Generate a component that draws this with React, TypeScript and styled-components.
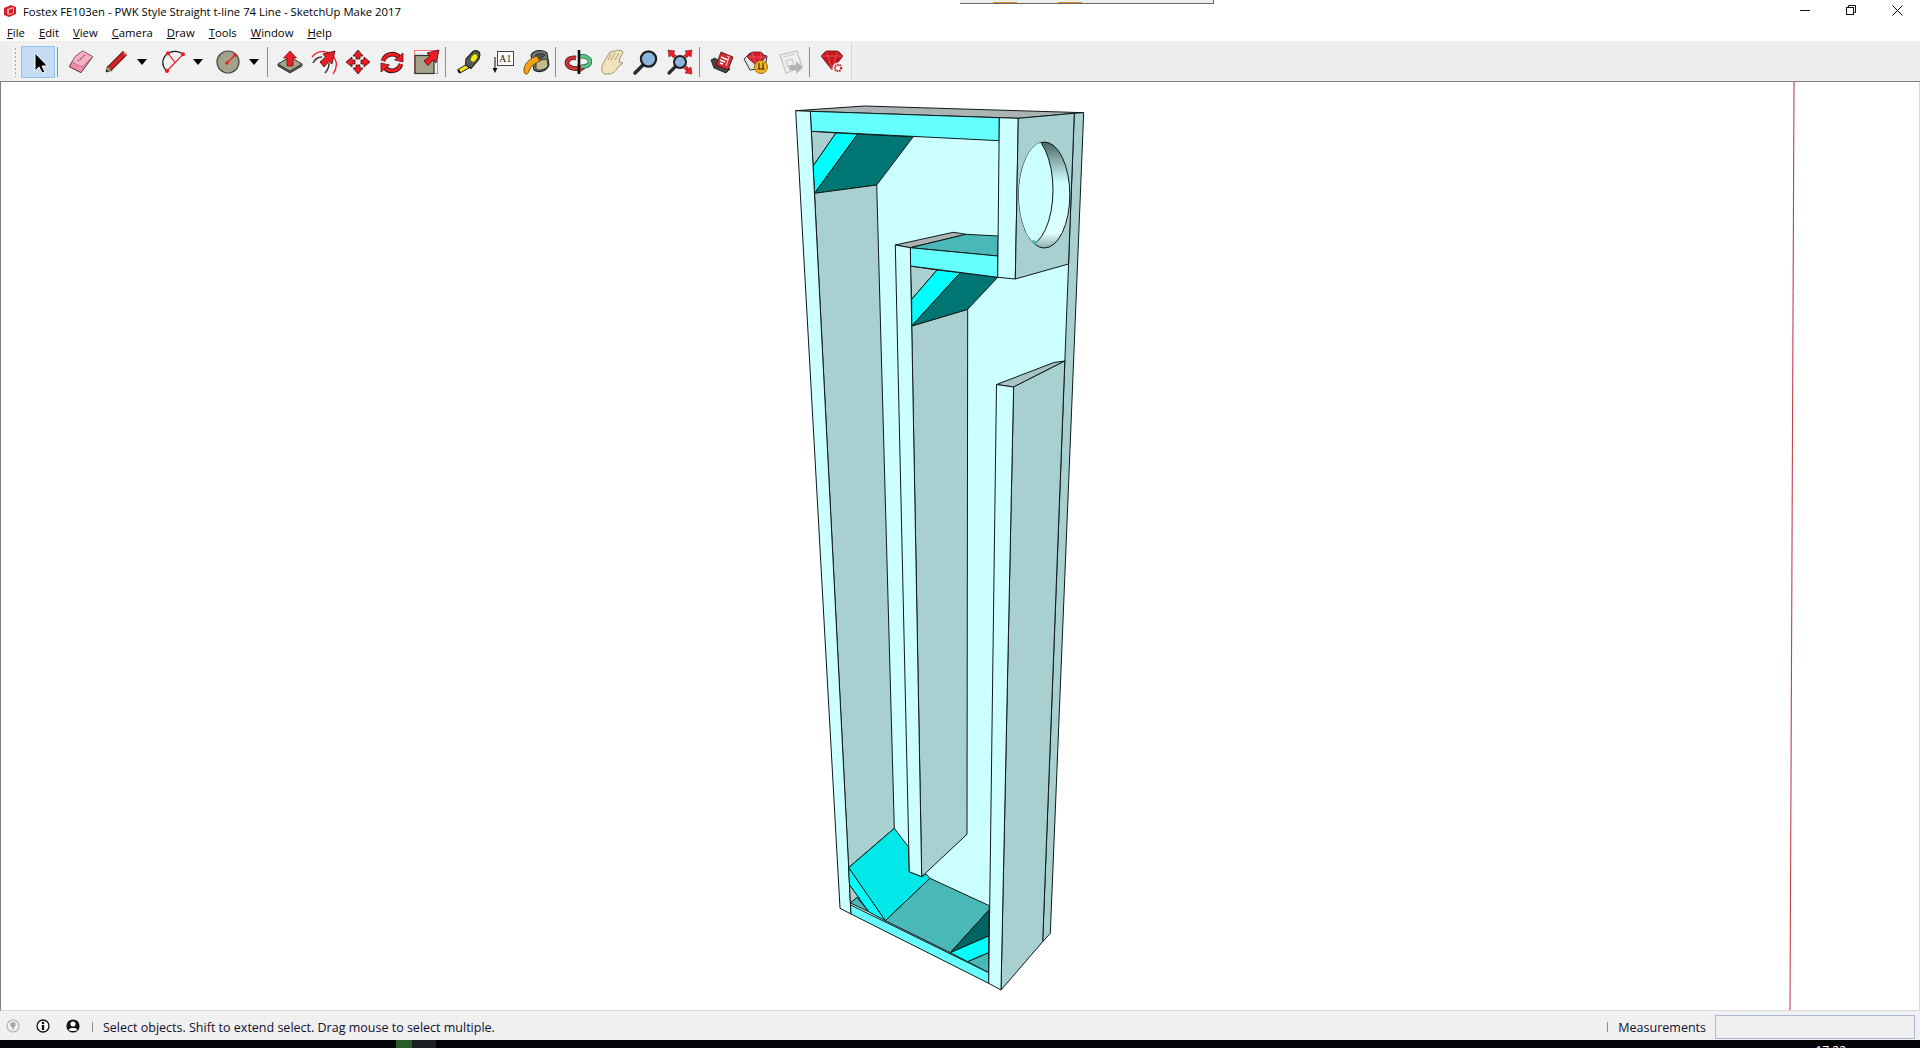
import React from 'react';
import styled, { createGlobalStyle } from 'styled-components';

const GlobalStyle = createGlobalStyle`
  html, body {
    margin: 0;
    padding: 0;
    background: #ffffff;
    overflow: hidden;
  }
`;

const uiFont = `"Open Sans", "Noto Sans", "Liberation Sans", sans-serif`;

/* ---------- toolbar icons, all on a 28 x 28 box ---------- */

const Icon = ({ children }: { children: React.ReactNode }) => (
  <svg width="28" height="28" viewBox="0 0 28 28">
    {children}
  </svg>
);

const SelectIcon = () => (
  <Icon>
    <path d="M11 5 L11 23 L15 19 L18 25 L21 24 L18 18 L23.5 18 Z" fill="#000" stroke="#fff" strokeWidth="1" />
  </Icon>
);

const EraserIcon = () => (
  <Icon>
    <path d="M15.7 3 L25.7 8.7 L14 24.7 L2.3 18.7 L8 8.7 Z" fill="#ef8fa8" stroke="#50303a" strokeWidth="1" />
    <path d="M15.7 3 L25.7 8.7 L15 19 L5 14 L8 8.7 Z" fill="#f6b2c2" stroke="#a06070" strokeWidth="0.7" />
    <path d="M11 13 L18 7" stroke="#a05868" strokeWidth="1.6" strokeDasharray="1.5 1" />
  </Icon>
);

const PencilIcon = () => (
  <Icon>
    <path d="M7 21 L23 5" stroke="#3a1010" strokeWidth="6" strokeLinecap="butt" />
    <path d="M7 21 L23 5" stroke="#d81e24" strokeWidth="4" strokeLinecap="butt" />
    <path d="M4 24 L5.5 18 L10 22.5 Z" fill="#b8a070" stroke="#404020" strokeWidth="0.8" />
    <path d="M4 24 L4.7 21.5 L6.5 23.2 Z" fill="#111" />
    <path d="M22 4 L24.5 6.5" stroke="#e8a0a0" strokeWidth="2" />
  </Icon>
);

const ArcIcon = () => (
  <Icon>
    <path d="M9 23 C3 18 3.5 10 10 5.3 C14.5 2.5 21 2.8 25 6.3" fill="none" stroke="#111" strokeWidth="1.2" />
    <path d="M25 6.3 L9 23 M10 5.3 L17 14.5" stroke="#ee1c25" strokeWidth="1.2" />
    <circle cx="10" cy="5.3" r="2" fill="#ee1c25" />
    <circle cx="25" cy="6.3" r="2" fill="#ee1c25" />
    <circle cx="9" cy="23" r="2" fill="#ee1c25" />
  </Icon>
);

const CircleIcon = () => (
  <Icon>
    <circle cx="14" cy="14" r="11" fill="#a5a28a" stroke="#4a4a40" strokeWidth="1.2" />
    <path d="M13 15 L21 7" stroke="#ee1c25" strokeWidth="1.2" />
    <circle cx="13" cy="15" r="1.8" fill="#ee1c25" />
    <circle cx="21" cy="7" r="1.8" fill="#ee1c25" />
  </Icon>
);

const PushPullIcon = () => (
  <Icon>
    <path d="M2 16 L14 9 L26 16 L26 18 L14 25 L2 18 Z" fill="#55553f" stroke="#222" strokeWidth="0.8" />
    <path d="M2 16 L14 9 L26 16 L14 23 Z" fill="#a5a28a" stroke="#333" strokeWidth="0.8" />
    <path d="M14 3 L20.5 10 L17 10 L17 18 L11 18 L11 10 L7.5 10 Z" fill="#ee1c25" stroke="#601010" strokeWidth="0.7" />
  </Icon>
);

const FollowIcon = () => (
  <Icon>
    <path d="M2 9 C8 1 20 2 25 11 C27.5 16 26.5 21 23 26" fill="none" stroke="#ee1c25" strokeWidth="1.3" />
    <path d="M3 15 C5 11 9 9 12 9 M15 25 C18 22 19 18 19 15" fill="none" stroke="#333" strokeWidth="1.4" />
    <path d="M25 3 L13 6 L15.5 9 L10 14 L14 19 L19 13.5 L22 16 Z" fill="#ee1c25" stroke="#401010" strokeWidth="0.8" />
  </Icon>
);

const MoveIcon = () => (
  <Icon>
    {[0, 90, 180, 270].map((angle) => (
      <path
        key={angle}
        d="M14 2 L19 8 L16 8 L16 11 L12 11 L12 8 L9 8 Z"
        fill="#ee1c25"
        stroke="#401010"
        strokeWidth="0.8"
        transform={`rotate(${angle} 14 14)`}
      />
    ))}
  </Icon>
);

const RotateIcon = () => (
  <Icon>
    <path d="M5 13 C7 6 16 4 21 9" fill="none" stroke="#301010" strokeWidth="4.6" />
    <path d="M5 13 C7 6 16 4 21 9" fill="none" stroke="#ee1c25" strokeWidth="3" />
    <path d="M25 5 L25 14 L16.5 12 Z" fill="#ee1c25" stroke="#401010" strokeWidth="0.7" />
    <path d="M23 16 C21 23 12 25 7 20" fill="none" stroke="#301010" strokeWidth="4.6" />
    <path d="M23 16 C21 23 12 25 7 20" fill="none" stroke="#ee1c25" strokeWidth="3" />
    <path d="M3 24 L3 15 L11.5 17 Z" fill="#ee1c25" stroke="#401010" strokeWidth="0.7" />
  </Icon>
);

const ScaleIcon = () => (
  <Icon>
    <rect x="2.5" y="2.5" width="23" height="23" fill="none" stroke="#f08088" strokeWidth="1" />
    <rect x="3" y="7.5" width="19" height="18" fill="#a5a28a" stroke="#333" strokeWidth="1.2" />
    <path d="M27 2 L15 5 L18 8 L12 13 L16 17.5 L21 12 L24 15 Z" fill="#ee1c25" stroke="#401010" strokeWidth="0.8" />
  </Icon>
);

const TapeIcon = () => (
  <Icon>
    <path d="M13 16 L4 21.5 L6 25 L15 20 Z" fill="#f2e020" stroke="#222" strokeWidth="1" />
    <path d="M12 11 L19 3.5 C22 1.5 26 3 26 6.5 L25 11 L17 20.5 L11.5 17 Z" fill="#5a5a4c" stroke="#1c1c1c" strokeWidth="1.1" />
    <ellipse cx="20" cy="10" rx="2.6" ry="4" fill="#f6ee10" transform="rotate(30 20 10)" />
    <path d="M4 21.5 L6 25" stroke="#111" strokeWidth="2" />
  </Icon>
);

const TextIcon = () => (
  <Icon>
    <rect x="9.5" y="3.5" width="16" height="14" fill="#ffffff" stroke="#444" strokeWidth="1" />
    <IconLabel x="17.5" y="14">A1</IconLabel>
    <path d="M7 9 L7 21" stroke="#333" strokeWidth="1.2" />
    <path d="M4.5 20 L9.5 20 L7 25 Z" fill="#111" />
  </Icon>
);

const PaintIcon = () => (
  <Icon>
    <path d="M9 7 C12 2 21 1 25 5 L27 17 C24 24 16 25 12 22 Z" fill="#6e7a70" stroke="#222" strokeWidth="1.1" />
    <path d="M13 8 C16 5 21 5 23 7 C21 10 16 12 13 8 Z" fill="#4d5450" stroke="#222" strokeWidth="0.8" />
    <path d="M14 13 L25 11 L26 18 C23 22 17 23 14 21 Z" fill="#c4bc8c" stroke="#222" strokeWidth="0.8" />
    <path d="M15 8 C8 10 1 16 2 24 C3 27 6 27 7 23 C9 18 13 15 18 13 Z" fill="#f6a316" stroke="#5a3a05" strokeWidth="0.8" />
  </Icon>
);

const OrbitIcon = () => (
  <Icon>
    <path d="M12 10 C6 9 3 12 3 15 C3 19 8 21 14 20.5" fill="none" stroke="#5e1212" strokeWidth="4.6" />
    <path d="M12 10 C6 9 3 12 3 15 C3 19 8 21 14 20.5" fill="none" stroke="#c9353a" strokeWidth="3" />
    <path d="M14 16 L21 20.5 L14 25 Z" fill="#d8383c" stroke="#5e1212" strokeWidth="0.7" />
    <path d="M16 8.5 C21 7.5 26 10 26 14 C26 17 22 19 17 18.5" fill="none" stroke="#1d6a40" strokeWidth="4.4" />
    <path d="M16 8.5 C21 7.5 26 10 26 14 C26 17 22 19 17 18.5" fill="none" stroke="#5ec48a" strokeWidth="2.8" />
    <path d="M15 2 L15 26" stroke="#111" strokeWidth="2.6" />
  </Icon>
);

const HandIcon = () => (
  <Icon>
    <path
      d="M6 26 C2 22 4 17 7 12 L12 4 L14 4 L15 3 L18 3 L20 2 L24 3 L25 5 L22 10 L21 14 L25 15 L20 19 C18 23 15 26 11 26 Z"
      fill="#f2e2bc"
      stroke="#a2946e"
      strokeWidth="1"
    />
    <path d="M13 6 L10 12 M17 5 L13 12 M21 5 L17 12" stroke="#a89a72" strokeWidth="0.9" />
  </Icon>
);

const ZoomIcon = () => (
  <Icon>
    <path d="M11 17 L3 25" stroke="#2c2c2c" strokeWidth="3.6" strokeLinecap="round" />
    <circle cx="16.5" cy="11" r="7.6" fill="#8ab6de" stroke="#1e1e1e" strokeWidth="2.2" />
  </Icon>
);

const ZoomExtentsIcon = () => (
  <Icon>
    <path d="M10 18 L3 25" stroke="#2c2c2c" strokeWidth="3.2" strokeLinecap="round" />
    <circle cx="14" cy="14" r="6" fill="#8ab6de" stroke="#1e1e1e" strokeWidth="2" />
    <path d="M2 2 L9 3 L7.5 5 L10 7.5 L7.5 10 L5 7.5 L3 9 Z" fill="#ee1c25" stroke="#501010" strokeWidth="0.5" />
    <path d="M26 2 L19 3 L20.5 5 L18 7.5 L20.5 10 L23 7.5 L25 9 Z" fill="#ee1c25" stroke="#501010" strokeWidth="0.5" />
    <path d="M26 26 L19 25 L20.5 23 L18 20.5 L20.5 18 L23 20.5 L25 19 Z" fill="#ee1c25" stroke="#501010" strokeWidth="0.5" />
  </Icon>
);

const WarehouseIcon = () => (
  <Icon>
    <path d="M3 12 L7 10 L22 21 L18 25 L6 20 Z" fill="#444" stroke="#111" strokeWidth="0.8" />
    <path d="M25 9 L20 22 L8 17 L13 4 Z" fill="#d9272e" stroke="#4a1010" strokeWidth="0.8" />
    <path d="M13 9 L20 12 M12 12 L17 14 M12 15 L15 16" stroke="#fff" strokeWidth="1.4" />
    <path d="M19 8 L21 9 L18 18" fill="none" stroke="#f3c0c0" strokeWidth="1.2" />
  </Icon>
);

const ShareIcon = () => (
  <Icon>
    <path d="M2 11 L8 5 L25 8 L23 20 L8 22 Z" fill="#e4e4e4" stroke="#333" strokeWidth="1" />
    <path d="M5 9 L10 4 L19 4 L24 9 L15 18 Z" fill="#d31e2c" stroke="#5a0a10" strokeWidth="0.7" />
    <path d="M5 9 L24 9 M10 4 L11 9 L15 18 L19 9 L19 4" fill="none" stroke="#f07078" strokeWidth="0.6" />
    <circle cx="19" cy="19" r="6.5" fill="#f7b614" stroke="#7a5505" strokeWidth="0.8" />
    <path d="M17 15 L17 21 M21 15 L21 21 M15.5 21 L22.5 21" stroke="#222" strokeWidth="1.1" />
  </Icon>
);

const UploadIcon = () => (
  <Icon>
    <path d="M4 7 L21 3 L26 19 L10 25 Z" fill="#efefef" stroke="#c2c2c2" strokeWidth="1.2" />
    <path d="M7 9 L19 6 M10 13 L16 11 L18 17 L12 19 Z" fill="none" stroke="#c8c8c8" strokeWidth="1.2" />
    <path d="M13 17 L20 17 L20 13 L27 19.5 L20 26 L20 22 L13 22 Z" fill="#b4b4b4" />
  </Icon>
);

const RubyIcon = () => (
  <Icon>
    <path d="M3 8 L8 3 L20 3 L25 8 L14 22 Z" fill="#c8161e" stroke="#50060a" strokeWidth="0.7" />
    <path d="M3 8 L25 8 M8 3 L10 8 L14 22 L18 8 L20 3" fill="none" stroke="#ee6a70" strokeWidth="0.7" />
    <circle cx="20" cy="20" r="5.5" fill="#ffffff" />
    <circle cx="20" cy="20" r="3.2" fill="none" stroke="#d3202a" strokeWidth="2.2" strokeDasharray="1.6 0.7" />
  </Icon>
);

/* ---------- small pieces ---------- */

const LogoIcon = () => (
  <svg width="14" height="14" viewBox="0 0 14 14">
    <path d="M1 4 L8 1 L13 3 L13 10 L6 13 L1 11 Z" fill="#d5202a" />
    <path d="M4 5 L10 3 L11 4 L11 9 L6 11 L4 10 Z" fill="#f6a0a4" />
    <path d="M6 6 L10 4.5 L10 8.5 L6 10 Z" fill="#d5202a" />
  </svg>
);

const MinimizeGlyph = () => (
  <svg width="10" height="10" viewBox="0 0 10 10">
    <path d="M0 5.5 H10" stroke="#111" strokeWidth="1" />
  </svg>
);

const RestoreGlyph = () => (
  <svg width="10" height="10" viewBox="0 0 10 10">
    <path d="M2.5 2.5 V0.5 H9.5 V7.5 H7.5" fill="none" stroke="#111" strokeWidth="1" />
    <rect x="0.5" y="2.5" width="7" height="7" fill="none" stroke="#111" strokeWidth="1" />
  </svg>
);

const CloseGlyph = () => (
  <svg width="11" height="11" viewBox="0 0 11 11">
    <path d="M0.5 0.5 L10.5 10.5 M10.5 0.5 L0.5 10.5" stroke="#111" strokeWidth="1" />
  </svg>
);

const GeoGlyph = () => (
  <svg width="14" height="14" viewBox="0 0 14 14">
    <circle cx="7" cy="7" r="6" fill="#f0f0f0" stroke="#b4b4b4" strokeWidth="1.2" />
    <circle cx="7" cy="5.5" r="2.6" fill="#a8a8a8" />
    <path d="M5.6 7 L7 12 L8.4 7 Z" fill="#a8a8a8" />
  </svg>
);

const InfoGlyph = () => (
  <svg width="14" height="14" viewBox="0 0 14 14">
    <circle cx="7" cy="7" r="6" fill="#ffffff" stroke="#111" strokeWidth="1.3" />
    <circle cx="7" cy="4" r="1.3" fill="#111" />
    <path d="M5.8 6 H8.2 V11 H5.8 Z" fill="#111" />
  </svg>
);

const UserGlyph = () => (
  <svg width="14" height="14" viewBox="0 0 14 14">
    <circle cx="7" cy="7" r="6.6" fill="#111" />
    <circle cx="7" cy="5" r="2.5" fill="#fff" />
    <path d="M2.6 11 C3.4 8.4 10.6 8.4 11.4 11 C9.5 12.4 4.5 12.4 2.6 11 Z" fill="#fff" />
  </svg>
);

/* ---------- the model, in page coordinates ---------- */

type Face = { points: string; fill: string };

const light = '#ccffff';
const wall = '#a8d0d0';
const deep = '#007674';
const bright = '#00ffff';
const beam = '#66ffff';
const shelf = '#4bb8b8';
const topGrey = '#aab4b4';

const faces: Face[] = [
  { points: '794.7,110.7 863.3,106 1082.7,112.7 1073.3,113.3 1017.3,118.3 998.3,117.7 809.3,111.3', fill: topGrey },
  { points: '1073.3,113.3 1082.7,112.7 1049.3,933.3 1041.7,941.7', fill: wall },
  { points: '809.3,111.3 998.3,117.7 998.3,140.7 810.3,131.3', fill: beam },
  { points: '810.3,131.3 835,133 812.1,166', fill: wall },
  { points: '835,133 856.7,134 813.5,193.3 812.1,166', fill: bright },
  { points: '856.7,134 912,137 875.7,185 813.5,193.3', fill: deep },
  { points: '813.5,193.3 875.7,185 893.3,828.3 847.6,867.7', fill: wall },
  { points: '794.7,110.7 809.3,111.3 850,914 839,908.3', fill: light },
  { points: '847.6,867.7 893.3,828.3 907.3,846.7 908.3,871.7 920.7,876.7 925,874 929,878.3 884.3,920.7', fill: '#00e8e8' },
  { points: '929,878.3 988.3,905.7 988,910 949.3,952.7 884.3,920.7', fill: shelf },
  { points: '988,910 987.7,936 949.3,952.7', fill: '#006462' },
  { points: '949.3,952.7 987.7,936 987.7,952.7 966.7,961.7', fill: bright },
  { points: '966.7,961.7 987.7,952.7 987.7,972.7', fill: shelf },
  { points: '847.6,867.7 884.3,920.7 867.7,911.7 848.5,885', fill: bright },
  { points: '848.5,885 858.3,898.3 849.4,903', fill: wall },
  { points: '856,897.3 867.7,911.7 849.4,903', fill: shelf },
  { points: '849.6,905 987.7,972.7 987.7,983.3 850,914', fill: beam },
  { points: '910.7,326 966.7,309.3 966,834.3 920.7,876.7', fill: wall },
  { points: '909.3,266 936,270 910.7,299.3', fill: wall },
  { points: '936,270 959.3,272.7 910.7,326 910.7,299.3', fill: bright },
  { points: '959.3,272.7 996.7,277.3 966.7,309.3 910.7,326', fill: deep },
  { points: '894.3,245 952.3,232.3 965,234.3 909.3,247.7', fill: topGrey },
  { points: '909.3,247.7 965,234.3 997.3,236 996.7,256', fill: shelf },
  { points: '909.3,247.7 996.7,256 996.7,277.3 909.3,266', fill: beam },
  { points: '894.3,245 909.3,247.7 920.7,876.7 908.3,871.7', fill: light },
  { points: '998.3,117.7 1017.3,118.3 1014.3,279 996.7,277.3', fill: light },
  { points: '1017.3,118.3 1073.3,113.3 1067.5,264 1014.3,279', fill: wall },
  { points: '995.5,384.5 1053,362.5 1063.8,361 1012.6,387', fill: '#a8c4c4' },
  { points: '1012.6,387 1063.8,361 1041.7,941.7 1000,990', fill: wall },
  { points: '995.5,384.5 1012.6,387 1000,990 987.7,983.3', fill: light },
];

const Model = () => (
  <Drawing viewBox="0 82 1918 928" preserveAspectRatio="none">
    <defs>
      <linearGradient id="bore" x1="0" y1="0" x2="0" y2="1">
        <stop offset="0" stopColor="#47645f" />
        <stop offset="0.14" stopColor="#7f9f9f" />
        <stop offset="0.38" stopColor="#ccffff" />
        <stop offset="0.86" stopColor="#e2ffff" />
        <stop offset="1" stopColor="#8faaaa" />
      </linearGradient>
      <clipPath id="hole">
        <ellipse cx="1043.3" cy="195" rx="25.5" ry="53" />
      </clipPath>
    </defs>
    <polygon
      points="810,131 998,141 998,118 1073,114 1042,940 1000,985 988,975 850,905"
      fill={light}
    />
    {faces.map((face) => (
      <polygon
        key={face.points}
        points={face.points}
        fill={face.fill}
        stroke="#101818"
        strokeWidth="1"
        strokeLinejoin="round"
      />
    ))}
    <ellipse cx="1043.3" cy="195" rx="25.5" ry="53" fill="url(#bore)" stroke="#101818" strokeWidth="1" />
    <g clipPath="url(#hole)">
      <ellipse cx="1026" cy="190" rx="26" ry="56" fill={light} stroke="#101818" strokeWidth="1" />
      <polygon points="1026,239 1036,241 1034,246 1028,244" fill={shelf} />
    </g>
    <line x1="1793" y1="82" x2="1789" y2="1011" stroke="#c04050" strokeWidth="1.1" />
  </Drawing>
);

/* ---------- page ---------- */

const menuItems = ['File', 'Edit', 'View', 'Camera', 'Draw', 'Tools', 'Window', 'Help'];

export default function App() {
  return (
    <Page>
      <GlobalStyle />
      <TitleBar>
        <LogoIcon />
        <TitleText>Fostex FE103en - PWK Style Straight t-line 74 Line - SketchUp Make 2017</TitleText>
        <WindowBehind>
          <OrangeTab />
          <OrangeTab />
        </WindowBehind>
        <WindowButtons>
          <WindowButton><MinimizeGlyph /></WindowButton>
          <WindowButton><RestoreGlyph /></WindowButton>
          <WindowButton><CloseGlyph /></WindowButton>
        </WindowButtons>
      </TitleBar>

      <MenuBar>
        {menuItems.map((item) => (
          <MenuItem key={item}>
            <u>{item[0]}</u>
            {item.slice(1)}
          </MenuItem>
        ))}
      </MenuBar>

      <ToolbarArea>
        <ToolStrip>
          <Grip />
          <ActiveTool><SelectIcon /></ActiveTool>
          <Separator />
          <Tool $width={36}><EraserIcon /></Tool>
          <Tool><PencilIcon /></Tool>
          <DropArrow />
          <Tool><ArcIcon /></Tool>
          <DropArrow />
          <Tool><CircleIcon /></Tool>
          <DropArrow />
          <Separator />
          <Tool><PushPullIcon /></Tool>
          <Tool><FollowIcon /></Tool>
          <Tool><MoveIcon /></Tool>
          <Tool><RotateIcon /></Tool>
          <Tool><ScaleIcon /></Tool>
          <Separator />
          <Tool><TapeIcon /></Tool>
          <Tool><TextIcon /></Tool>
          <Tool><PaintIcon /></Tool>
          <Separator />
          <Tool><OrbitIcon /></Tool>
          <Tool><HandIcon /></Tool>
          <Tool><ZoomIcon /></Tool>
          <Tool><ZoomExtentsIcon /></Tool>
          <Separator />
          <Tool><WarehouseIcon /></Tool>
          <Tool><ShareIcon /></Tool>
          <Tool><UploadIcon /></Tool>
          <Separator />
          <Tool><RubyIcon /></Tool>
        </ToolStrip>
      </ToolbarArea>

      <Canvas>
        <Model />
      </Canvas>

      <StatusBar>
        <StatusIcons>
          <GeoGlyph />
          <InfoGlyph />
          <UserGlyph />
        </StatusIcons>
        <StatusDivider />
        <StatusText>Select objects. Shift to extend select. Drag mouse to select multiple.</StatusText>
        <StatusDivider $pushed />
        <StatusText>Measurements</StatusText>
        <MeasureBox />
      </StatusBar>

      <Taskbar>
        <TaskGreen />
        <TaskDark />
        <Clock>17:22</Clock>
      </Taskbar>
    </Page>
  );
}

const Page = styled.div`
  display: flex;
  flex-direction: column;
  width: 1920px;
  height: 1048px;
  overflow: hidden;
  background: #ffffff;
  font-family: ${uiFont};
  font-size: 12px;
  color: #000000;
`;

const TitleBar = styled.div`
  position: relative;
  display: flex;
  align-items: center;
  height: 21px;
  padding-left: 3px;
  flex-shrink: 0;
`;

const TitleText = styled.span`
  margin-left: 6px;
  padding-top: 1px;
  font-size: 11.3px;
  white-space: nowrap;
`;

const WindowBehind = styled.div`
  position: absolute;
  left: 960px;
  top: 0;
  width: 254px;
  height: 4px;
  display: flex;
  gap: 41px;
  padding: 2px 0 0 33px;
  box-sizing: border-box;
  background: #e9eef1;
  border-bottom: 1px solid #666666;
  border-right: 1px solid #666666;
`;

const OrangeTab = styled.div`
  width: 24px;
  height: 1px;
  background: #e58a1f;
`;

const WindowButtons = styled.div`
  display: flex;
  margin-left: auto;
  height: 21px;
`;

const WindowButton = styled.div`
  display: flex;
  align-items: center;
  justify-content: center;
  width: 46px;
  padding-bottom: 1px;
`;

const MenuBar = styled.div`
  display: flex;
  align-items: center;
  box-sizing: border-box;
  height: 20px;
  padding: 2px 0 0 7px;
  gap: 14px;
  flex-shrink: 0;
`;

const MenuItem = styled.span`
  font-size: 11.3px;
  white-space: nowrap;
`;

const ToolbarArea = styled.div`
  display: flex;
  align-items: flex-start;
  height: 38px;
  padding: 2px 0 0 12px;
  background: #eeeeee;
  border-bottom: 2px solid #808080;
  flex-shrink: 0;
  margin-bottom: -1px;
`;

const ToolStrip = styled.div`
  display: flex;
  align-items: center;
  width: 839px;
  height: 38px;
  background: #f1f1f1;
  border-right: 1px solid #d6d6d6;
`;

const Grip = styled.div`
  width: 3px;
  height: 30px;
  margin: 0 4px 0 2px;
  background-image: radial-gradient(#a8a8a8 0.9px, transparent 1px);
  background-size: 3px 4px;
`;

const Tool = styled.div<{ $width?: number }>`
  display: flex;
  align-items: center;
  justify-content: center;
  width: ${({ $width }) => $width ?? 34}px;
  height: 32px;
  flex-shrink: 0;
`;

const ActiveTool = styled(Tool)`
  box-sizing: border-box;
  background: #c4ddf5;
  border: 1px solid #92c2f0;
`;

const Separator = styled.div`
  width: 1px;
  height: 30px;
  margin: 0 5px 0 2px;
  background: #8c8c8c;
  flex-shrink: 0;
`;

const DropArrow = styled.div`
  position: relative;
  width: 18px;
  height: 20px;
  flex-shrink: 0;
  background: #f3f3f3;

  &::after {
    content: '';
    position: absolute;
    left: 4px;
    top: 7px;
    border-left: 5px solid transparent;
    border-right: 5px solid transparent;
    border-top: 6px solid #000000;
  }

  & + ${Tool}, & + ${Separator} {
    margin-left: 4px;
  }
`;

const IconLabel = styled.text`
  font-family: 'Liberation Serif', 'DejaVu Serif', serif;
  font-size: 9.5px;
  text-anchor: middle;
  letter-spacing: 0.4px;
  fill: #111111;
`;

const Canvas = styled.div`
  flex: 1;
  min-height: 0;
  background: #ffffff;
  border-left: 1px solid #808080;
  border-right: 1px solid #d8d8d8;
  border-bottom: 1px solid #d8d8d8;
`;

const Drawing = styled.svg`
  display: block;
  width: 100%;
  height: 100%;
`;

const StatusBar = styled.div`
  display: flex;
  align-items: center;
  height: 29px;
  padding: 0 5px 0 6px;
  background: #f0f0f0;
  flex-shrink: 0;
`;

const StatusIcons = styled.div`
  display: flex;
  align-items: center;
  gap: 16px;
`;

const StatusDivider = styled.div<{ $pushed?: boolean }>`
  width: 1px;
  height: 10px;
  margin: ${({ $pushed }) => ($pushed ? '2px 10px 0 auto' : '2px 10px 0 12px')};
  background: #8c8c8c;
`;

const StatusText = styled.span`
  margin-top: 3px;
  font-size: 12.5px;
  color: #101030;
  white-space: nowrap;
`;

const MeasureBox = styled.div`
  box-sizing: border-box;
  width: 200px;
  height: 24px;
  margin: 2px 0 0 9px;
  background: #f0f0f0;
  border: 1px solid #aab8d4;
`;

const Taskbar = styled.div`
  display: flex;
  height: 8px;
  padding: 0 4px 0 396px;
  background: #030308;
  overflow: hidden;
  flex-shrink: 0;
`;

const TaskGreen = styled.div`
  width: 16px;
  background: #2a5a2c;
`;

const TaskDark = styled.div`
  width: 24px;
  background: #1c2024;
`;

const Clock = styled.span`
  margin-left: auto;
  margin-right: 70px;
  padding-top: 3px;
  color: #ffffff;
  line-height: 16px;
`;
